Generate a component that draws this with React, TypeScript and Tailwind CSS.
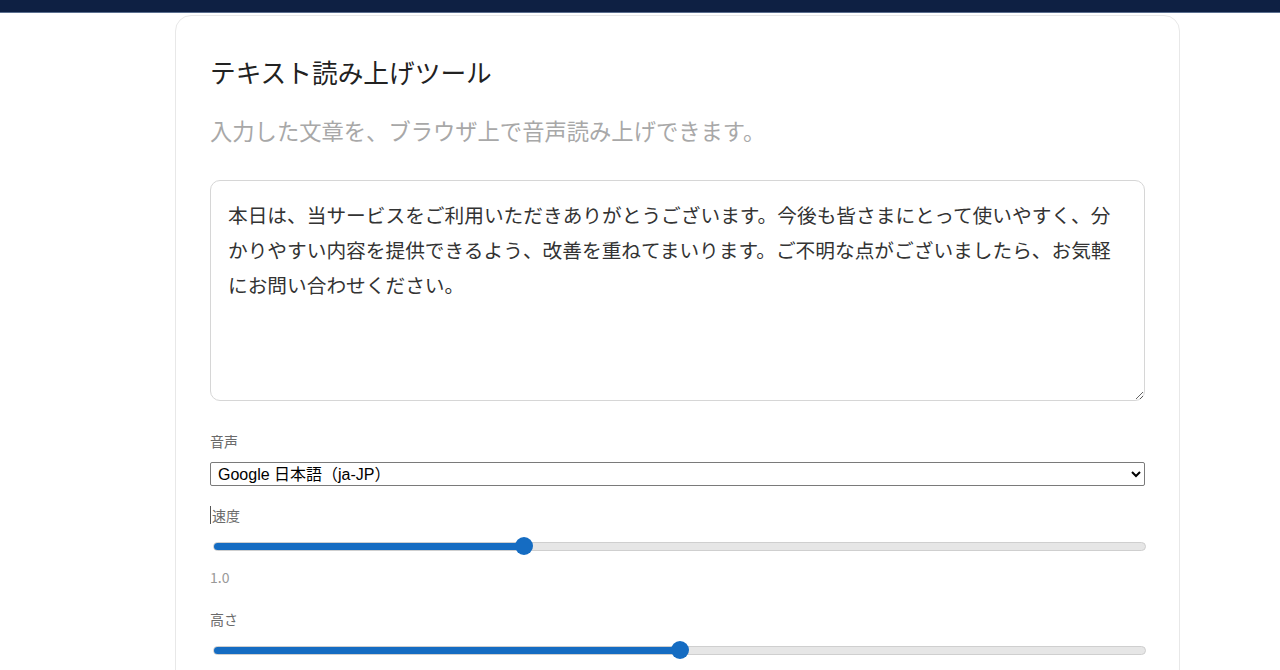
import React, { useState } from "react";

const JP = { fontFamily: '"Noto Sans CJK JP", "Noto Sans", sans-serif' };

function Slider({ value, min, max }: { value: number; min: number; max: number }) {
  const pct = ((value - min) / (max - min)) * 100;
  return (
    <div className="relative h-5 ml-[3px] mr-[-1px] flex items-center">
      <div className="relative h-[9px] w-full rounded-full bg-[#e6e6e6] border border-[#cfcfcf] overflow-hidden">
        <div className="h-full bg-[#156cc2]" style={{ width: `${pct}%` }} />
      </div>
      <div
        className="absolute top-1/2 h-[18px] w-[18px] -translate-x-1/2 -translate-y-1/2 rounded-full bg-[#156cc2]"
        style={{ left: `${pct}%` }}
      />
    </div>
  );
}

export default function App() {
  const [text, setText] = useState(
    "本日は、当サービスをご利用いただきありがとうございます。今後も皆さまにとって使いやすく、分かりやすい内容を提供できるよう、改善を重ねてまいります。ご不明な点がございましたら、お気軽にお問い合わせください。"
  );
  return (
    <div className="min-h-[670px] bg-white overflow-hidden" style={JP}>
      <div className="h-[13px] bg-[#0e2043] border-b border-[#5b6f8f]" />
      <div className="ml-[175px] mt-[2px] w-[1005px] h-[900px] rounded-[16px] border border-[#e8e8e8] bg-white px-[34px] pt-[36px]">
        <h1 className="text-[25.7px] leading-[40px] text-[#222] font-normal">テキスト読み上げツール</h1>
        <p className="mt-[22px] text-[22.3px] leading-[32px] text-[#a8a8a8]">入力した文章を、ブラウザ上で音声読み上げできます。</p>
        <textarea
          value={text}
          onChange={(e) => setText(e.target.value)}
          className="mt-[34px] block w-[935px] h-[221px] rounded-[10px] border border-[#d6d6d6] pl-[17px] pr-[28px] pt-[16px] text-[19.7px] leading-[35px] text-[#333] resize-y outline-none"
          style={JP}
        />
        <div className="mt-[30px] text-[14px] leading-[20px] text-[#6a6a6a]">音声</div>
        <select
          className="mt-[11px] block w-[935px] h-[24px] border border-[#7a7a7a] rounded-[2px] pl-[3px] text-[16px] text-black bg-white"
          style={{ fontFamily: '"Liberation Sans", "Noto Sans CJK JP", sans-serif' }}
        >
          <option>Google 日本語（ja-JP）</option>
        </select>
        <div className="mt-[19px] flex items-center text-[14px] leading-[20px] text-[#6a6a6a]">
          <span className="inline-block w-px h-[18px] bg-[#555] mr-[1px]" />
          速度
        </div>
        <div className="mt-[11px]">
          <Slider value={1.0} min={0.5} max={2} />
        </div>
        <div className="mt-[11px] text-[14px] leading-[20px] text-[#999]">1.0</div>
        <div className="mt-[22px] text-[14px] leading-[20px] text-[#6a6a6a]">高さ</div>
        <div className="mt-[11px]">
          <Slider value={1.0} min={0} max={2} />
        </div>
      </div>
    </div>
  );
}
